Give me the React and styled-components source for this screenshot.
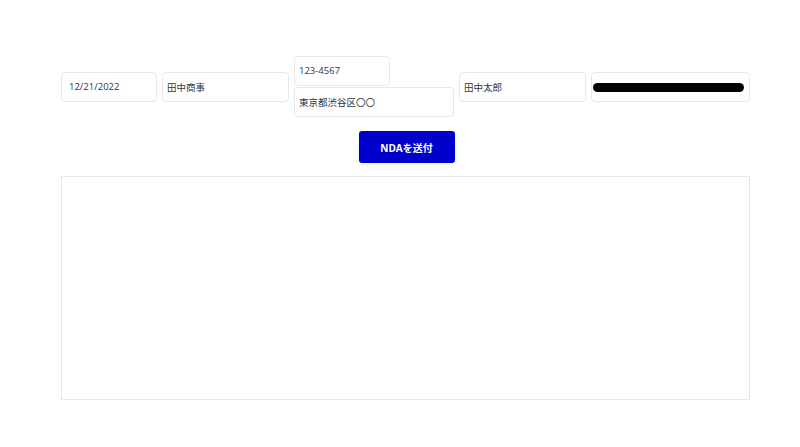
import styled, { createGlobalStyle } from "styled-components";

const GlobalStyle = createGlobalStyle`
    body {
        margin: 0;
        background: #ffffff;
        font-family: "Open Sans", "Noto Sans CJK JP", sans-serif;
    }
`

const Page = styled.main`
    width: 800px;
    height: 447px;
    padding: 57px 0 0 61px;
    box-sizing: border-box;
`

const FieldRow = styled.section`
    display: flex;
    align-items: center;
    gap: 5px;
    width: 689px;
`

const Stack = styled.div`
    display: flex;
    flex-direction: column;
    gap: 1px;
    margin-top: -1px;
`

const Field = styled.div`
    position: relative;
    width: ${props => props.$w}px;
    height: 30px;
    box-sizing: border-box;
    border: 1px solid #e6e6ec;
    border-radius: 4px;
    background: #fff;
    display: flex;
    align-items: center;
    padding: 0 0 1px ${props => props.$pad || 4}px;
    font-size: 9.5px;
    color: #333340;
`

const Redacted = styled.span`
    display: block;
    width: 151px;
    height: 9px;
    border-radius: 5px;
    background: #000;
    margin-left: -3px;
    margin-top: 2px;
`

const ButtonBar = styled.div`
    display: flex;
    justify-content: center;
    width: 689px;
    margin-top: 14px;
`

const SendButton = styled.button`
    width: 96px;
    height: 32px;
    border: none;
    border-radius: 3px;
    background: #0000cc;
    color: #fff;
    font-family: "Open Sans", "Noto Sans CJK JP", sans-serif;
    font-weight: 700;
    font-size: 10px;
    box-shadow: 0 3px 8px rgba(0, 0, 60, 0.06);
    margin-left: 2px;
`

const Preview = styled.div`
    width: 689px;
    height: 224px;
    box-sizing: border-box;
    margin-top: 13px;
    border: 1px solid #e6e6ec;
`

function App() {
    return (
        <>
            <GlobalStyle />
            <Page>
                <FieldRow>
                    <Field $w={96} $pad={7}>12/21/2022</Field>
                    <Field $w={127}>田中商事</Field>
                    <Stack>
                        <Field $w={96}>123-4567</Field>
                        <Field $w={160}>東京都渋谷区〇〇</Field>
                    </Stack>
                    <Field $w={127}>田中太郎</Field>
                    <Field $w={159}><Redacted /></Field>
                </FieldRow>
                <ButtonBar>
                    <SendButton>NDAを送付</SendButton>
                </ButtonBar>
                <Preview />
            </Page>
        </>
    )
}

export default App
